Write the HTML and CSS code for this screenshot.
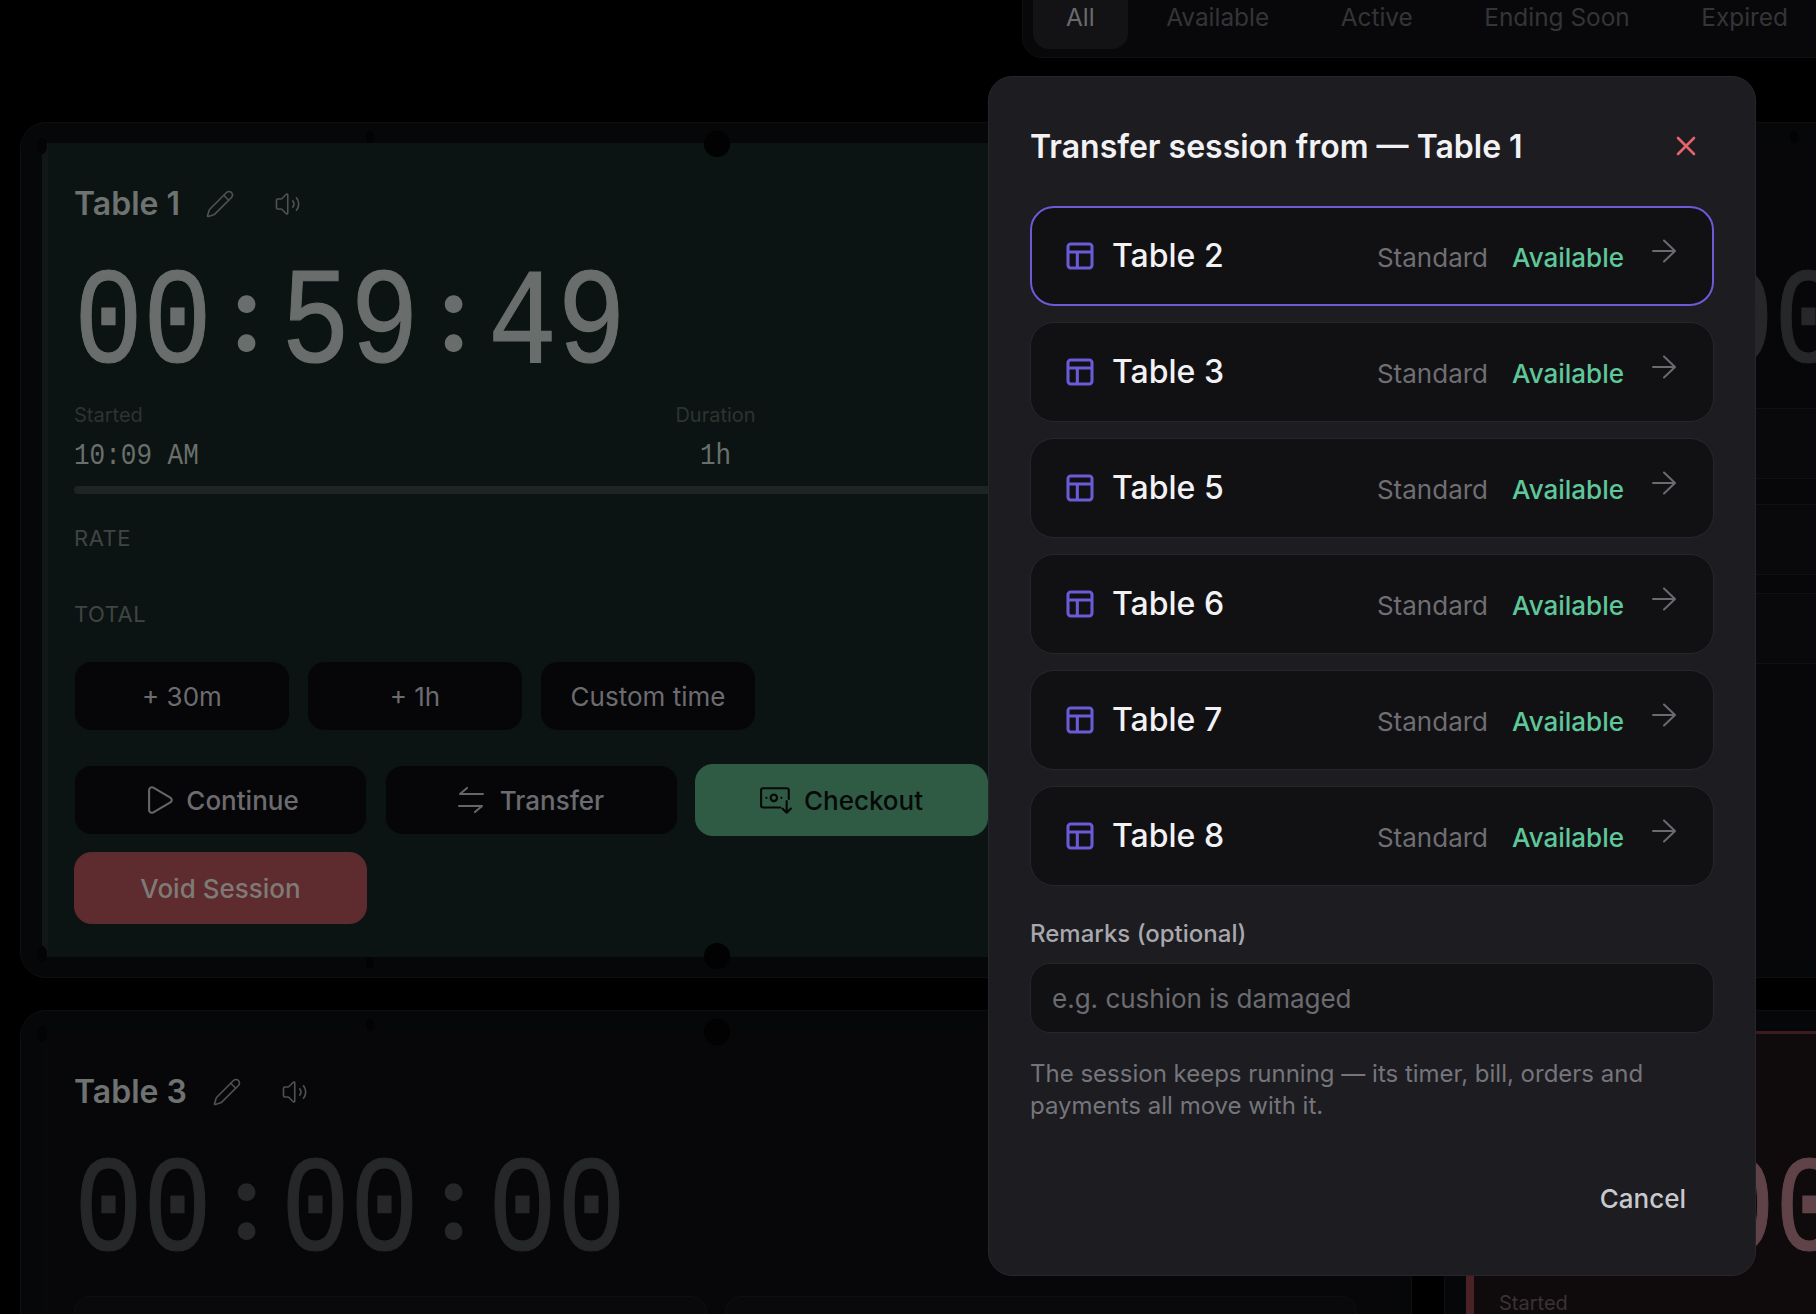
FILE: index.html
```html
<!DOCTYPE html>
<html lang="en">
<head>
    <meta charset="UTF-8">
    <title>Tables - Transfer session</title>
    <link rel="stylesheet" href="styles.css">
</head>
<body>
    <div class="page">
        <div class="filter-bar">
            <span class="filter-tab active">All</span>
            <span class="filter-tab">Available</span>
            <span class="filter-tab">Active</span>
            <span class="filter-tab">Ending Soon</span>
            <span class="filter-tab">Expired</span>
        </div>

        <div class="table-grid">
            <!-- running session -->
            <section class="table-card">
                <span class="pocket pocket-lg pocket-top"></span>
                <span class="pocket pocket-lg pocket-bottom"></span>
                <span class="pocket pocket-sm pocket-top-l"></span>
                <span class="pocket pocket-sm pocket-bottom-l"></span>
                <span class="pocket pocket-corner pocket-tl"></span>
                <span class="pocket pocket-corner pocket-bl"></span>
                <div class="felt felt-green">
                    <div class="card-head">
                        <h2>Table 1</h2>
                        <svg class="head-icon pencil" viewBox="0 0 24 24"><path d="M21.17 6.81a2.8 2.8 0 0 0-3.98-3.99L3.84 16.17a2 2 0 0 0-.5.83L2.02 21.35a.5.5 0 0 0 .62.62l4.35-1.32a2 2 0 0 0 .83-.5z"/><path d="M15 5l4 4"/></svg>
                        <svg class="head-icon speaker" viewBox="0 0 24 24"><path d="M11 4.7a.7.7 0 0 0-1.2-.5L6.4 7.6A1.4 1.4 0 0 1 5.4 8H3a1 1 0 0 0-1 1v6a1 1 0 0 0 1 1h2.400a1.400 1.400 0 0 1 1 .4l3.400 3.400a.7.7 0 0 0 1.200-.5z"/><path d="M15 9.500a4 4 0 0 1 0 5"/><path d="M18 7a8 8 0 0 1 0 10"/></svg>
                    </div>
                    <div class="timer-wrap"><span class="timer">00<span class="colon">:</span>59<span class="colon">:</span>49</span></div>
                    <div class="info-row">
                        <div><div class="info-label">Started</div><div class="info-value"><span>10:09 AM</span></div></div>
                        <div class="center"><div class="info-label">Duration</div><div class="info-value"><span>1h</span></div></div>
                        <div class="right"><div class="info-label">Ends</div><div class="info-value"><span>11:09 AM</span></div></div>
                    </div>
                    <div class="progress"></div>
                    <div class="caps rate">RATE</div>
                    <div class="caps total">TOTAL</div>
                    <div class="add-time">
                        <button class="btn">+ 30m</button>
                        <button class="btn">+ 1h</button>
                        <button class="btn">Custom time</button>
                    </div>
                    <div class="actions">
                        <button class="btn">
                            <svg class="btn-icon play" viewBox="0 0 24 24"><path d="M5 5a2 2 0 0 1 3.008-1.728l11.997 6.998a2 2 0 0 1 .003 3.458l-12 7A2 2 0 0 1 5 19z"/></svg>
                            Continue
                        </button>
                        <button class="btn">
                            <svg class="btn-icon swap" viewBox="0 0 26 26"><path d="M25 7H2L9 1"/><path d="M1 19H24L17 25"/></svg>
                            Transfer
                        </button>
                        <button class="btn btn-green">
                            <svg class="btn-icon cash" viewBox="0 0 30 26"><path d="M27 12V4a2 2 0 0 0-2-2H3a2 2 0 0 0-2 2v14a2 2 0 0 0 2 2h16"/><circle cx="13" cy="11" r="3"/><path d="M6 11h.1M20 11h.1"/><path d="M25 14v11M21 21l4 4 4-4"/></svg>
                            Checkout
                        </button>
                        <button class="btn btn-red">Void Session</button>
                    </div>
                </div>
            </section>

            <section class="table-card">
                <span class="pocket pocket-sm pocket-top-r"></span>
                <div class="felt felt-idle">
                    <div class="card-head"><h2>Table 2</h2></div>
                    <div class="timer-wrap"><span class="timer dim">00<span class="colon">:</span>00<span class="colon">:</span>00</span></div>
                    <div class="sub-box first"></div>
                    <div class="sub-box"></div>
                    <div class="sub-box tight"></div>
                </div>
            </section>

            <section class="table-card">
                <span class="pocket pocket-lg pocket-top"></span>
                <span class="pocket pocket-sm pocket-top-l"></span>
                <span class="pocket pocket-corner pocket-tl"></span>
                <div class="felt felt-idle">
                    <div class="card-head">
                        <h2>Table 3</h2>
                        <svg class="head-icon pencil" viewBox="0 0 24 24"><path d="M21.17 6.81a2.8 2.8 0 0 0-3.98-3.99L3.84 16.17a2 2 0 0 0-.5.83L2.02 21.35a.5.5 0 0 0 .62.62l4.35-1.32a2 2 0 0 0 .83-.5z"/><path d="M15 5l4 4"/></svg>
                        <svg class="head-icon speaker" viewBox="0 0 24 24"><path d="M11 4.7a.7.7 0 0 0-1.2-.5L6.4 7.6A1.4 1.4 0 0 1 5.4 8H3a1 1 0 0 0-1 1v6a1 1 0 0 0 1 1h2.400a1.400 1.400 0 0 1 1 .4l3.400 3.400a.7.7 0 0 0 1.200-.5z"/><path d="M15 9.500a4 4 0 0 1 0 5"/><path d="M18 7a8 8 0 0 1 0 10"/></svg>
                    </div>
                    <div class="timer-wrap"><span class="timer dim">00<span class="colon">:</span>00<span class="colon">:</span>00</span></div>
                    <div class="stat-boxes"><div></div><div></div></div>
                </div>
            </section>

            <section class="table-card">
                <div class="felt felt-red">
                    <div class="card-head"><h2>Table 4</h2></div>
                    <div class="timer-wrap"><span class="timer red">00<span class="colon">:</span>00<span class="colon">:</span>00</span></div>
                    <div class="info-row red-row">
                        <div><div class="info-label">Started</div></div>
                    </div>
                </div>
            </section>
        </div>
    </div>

    <!-- transfer dialog -->
    <div class="modal">
        <div class="modal-head">
            <h1>Transfer session from — Table 1</h1>
            <svg class="close" viewBox="0 0 20 20"><path d="M2 2l16 16M18 2L2 18"/></svg>
        </div>
        <div class="target-list">
            <div class="target selected">
                <svg class="table-icon" viewBox="0 0 24 24"><rect x="3" y="3" width="18" height="18" rx="2"/><path d="M3 9h18M10 9v12"/></svg>
                <span class="target-name">Table 2</span>
                <span class="target-type">Standard</span>
                <span class="target-status">Available</span>
                <svg class="arrow" viewBox="0 0 24 24"><path d="M1 12H23M12 1.500L23 12L12 22.500"/></svg>
            </div>
            <div class="target">
                <svg class="table-icon" viewBox="0 0 24 24"><rect x="3" y="3" width="18" height="18" rx="2"/><path d="M3 9h18M10 9v12"/></svg>
                <span class="target-name">Table 3</span>
                <span class="target-type">Standard</span>
                <span class="target-status">Available</span>
                <svg class="arrow" viewBox="0 0 24 24"><path d="M1 12H23M12 1.500L23 12L12 22.500"/></svg>
            </div>
            <div class="target">
                <svg class="table-icon" viewBox="0 0 24 24"><rect x="3" y="3" width="18" height="18" rx="2"/><path d="M3 9h18M10 9v12"/></svg>
                <span class="target-name">Table 5</span>
                <span class="target-type">Standard</span>
                <span class="target-status">Available</span>
                <svg class="arrow" viewBox="0 0 24 24"><path d="M1 12H23M12 1.500L23 12L12 22.500"/></svg>
            </div>
            <div class="target">
                <svg class="table-icon" viewBox="0 0 24 24"><rect x="3" y="3" width="18" height="18" rx="2"/><path d="M3 9h18M10 9v12"/></svg>
                <span class="target-name">Table 6</span>
                <span class="target-type">Standard</span>
                <span class="target-status">Available</span>
                <svg class="arrow" viewBox="0 0 24 24"><path d="M1 12H23M12 1.500L23 12L12 22.500"/></svg>
            </div>
            <div class="target">
                <svg class="table-icon" viewBox="0 0 24 24"><rect x="3" y="3" width="18" height="18" rx="2"/><path d="M3 9h18M10 9v12"/></svg>
                <span class="target-name">Table 7</span>
                <span class="target-type">Standard</span>
                <span class="target-status">Available</span>
                <svg class="arrow" viewBox="0 0 24 24"><path d="M1 12H23M12 1.500L23 12L12 22.500"/></svg>
            </div>
            <div class="target">
                <svg class="table-icon" viewBox="0 0 24 24"><rect x="3" y="3" width="18" height="18" rx="2"/><path d="M3 9h18M10 9v12"/></svg>
                <span class="target-name">Table 8</span>
                <span class="target-type">Standard</span>
                <span class="target-status">Available</span>
                <svg class="arrow" viewBox="0 0 24 24"><path d="M1 12H23M12 1.500L23 12L12 22.500"/></svg>
            </div>
        </div>
        <label class="remarks-label" for="remarks">Remarks (optional)</label>
        <input class="remarks" id="remarks" type="text" placeholder="e.g. cushion is damaged">
        <p class="help">The session keeps running — its timer, bill, orders and payments all move with it.</p>
        <div class="modal-foot">
            <button class="cancel">Cancel</button>
        </div>
    </div>
</body>
</html>
```

FILE: styles.css
```css
* { box-sizing: border-box; }
html, body { height: 100%; }
body {
    margin: 0; background: #000; overflow: hidden;
    font-family: Inter, "Noto Sans", sans-serif; color: #6e7371;
}
.page { margin-top: -10px; padding-left: 20px; width: 3000px; height: 1400px; overflow: hidden; }

/* filter tabs */
.filter-bar {
    display: flex; gap: 5.5px; height: 68px; margin-left: 1002px; width: 1000px;
    padding: 0 10px 8px; background: #08080a;
    border: 1px solid #101013; border-radius: 0 0 20px 20px;
}
.filter-tab {
    display: flex; align-items: center; padding: 0 33px 6px;
    font-size: 24.4px; color: #343437; border-radius: 0 0 16px 16px;
}
.filter-tab.active { background: #131316; color: #6a6a6e; }

.table-grid { display: grid; grid-template-columns: 1392px 1392px; gap: 32px; margin-top: 64px; }

/* table card: rail + felt */
.table-card {
    position: relative; height: 856px; padding: 20px 21px;
    background: #060709; border: 1px solid #0e0f11; border-radius: 26px;
}
.felt { height: 100%; padding: 41px 33px 32px 26px; border-left: 6px solid #101716; border-radius: 6px; }
.felt-green { background: #0b1412; }
.felt-idle { background: #070709; border-left-color: #08080a; }
.felt-red { background: #0f0b0c; border-left: 8px solid #4a2226; border-top: 3px solid #3a1c20; padding-left: 25px; padding-top: 38px; }

.pocket { position: absolute; background: #020203; border-radius: 50%; }
.pocket-lg { width: 26px; height: 26px; left: 683px; }
.pocket-top { top: 8px; }
.pocket-bottom { bottom: 8px; }
.pocket-sm { width: 8px; height: 12px; background: #030304; }
.pocket-top-l { top: 8px; left: 345px; }
.pocket-bottom-l { bottom: 8px; left: 345px; }
.pocket-top-r { top: 8px; left: 345px; }
.pocket-corner { width: 10px; height: 16px; left: 16px; background: #040405; }
.pocket-tl { top: 15px; }
.pocket-bl { bottom: 15px; }

.card-head { display: flex; align-items: center; height: 40px; }
.card-head h2 { margin: 0; font-size: 32px; line-height: 40px; font-weight: 600; color: #6e7371; }
.head-icon { width: 30px; height: 30px; fill: none; stroke: #4e5251; stroke-width: 1.3; stroke-linecap: round; stroke-linejoin: round; }
.head-icon.pencil { margin-left: 25px; }
.head-icon.speaker { margin-left: 39px; }

/* timer digits */
.timer-wrap { height: 147px; padding-top: 39px; }
.timer {
    display: inline-block; font-family: "Liberation Mono", monospace; font-size: 115px; line-height: 100px;
    color: #696e6c; -webkit-text-stroke: 1px currentColor; white-space: nowrap;
    transform: scaleY(1.2); transform-origin: 0 50%;
}
.colon {
    display: inline-block; width: 69px; text-align: center;
    font-family: Lato, sans-serif; font-weight: 900; font-size: 108px; -webkit-text-stroke: 0;
    transform: scaleY(.85) translateY(-4px);
}
.timer.dim { color: #262729; }
.timer.red { color: #5f4348; }

.info-row { display: grid; grid-template-columns: 1fr 1fr 1fr; margin-top: 32px; }
.info-row .center { text-align: center; }
.info-row .right { text-align: right; }
.info-label { font-size: 20px; line-height: 24px; color: #2e3331; }
.info-value { margin-top: 14px; font-family: "Liberation Mono", monospace; font-size: 26px; line-height: 30px; color: #6a6f6d; }
.info-value span { display: inline-block; transform: scaleY(1.15); }
.red-row .info-label { color: #3a3234; }

.progress { height: 8px; margin-top: 15px; background: #1e2423; border-radius: 4px; }
.caps { font-size: 22px; line-height: 28px; color: #3f4543; letter-spacing: 0.5px; }
.rate { margin-top: 30px; }
.total { margin-top: 48px; }

.btn {
    display: flex; align-items: center; justify-content: center; gap: 10px;
    height: 72px; background: #060608; border: solid #0b1412; border-width: 2px 1px; border-radius: 18px;
    font: 500 26px Inter, sans-serif; color: #6c6c70;
}
.add-time { display: grid; grid-template-columns: repeat(3, 216px); gap: 17px; margin-top: 32px; }
.add-time .btn { font-weight: 400; }
.actions { display: grid; grid-template-columns: repeat(3, 293px); gap: 16px 17.5px; margin-top: 32px; }
.btn-green { background: #2f5b45; border-color: #2f5b45; color: #060908; }
.btn-red { background: #5e2c2e; border-color: #5e2c2e; color: #7e7a78; }
.btn-icon { fill: none; stroke: #66666a; stroke-width: 2; stroke-linecap: round; stroke-linejoin: round; }
.play { width: 34px; height: 34px; stroke-width: 1.5; }
.swap { width: 26px; height: 26px; margin-right: 6px; }
.cash { width: 32px; height: 28px; margin-right: 2px; stroke: #060908; }
.stat-boxes { display: grid; grid-template-columns: 1fr 1fr; gap: 18px; margin-top: 37px; }
.stat-boxes div { height: 120px; background: #09090b; border: 1px solid #0f0f12; border-radius: 16px; }

.sub-box { height: 71px; background: #09090b; border-top: 1px solid #101012; border-bottom: 1px solid #101012; }
.sub-box.first { margin-top: 37px; }
.sub-box:not(.first) { margin-top: 25px; }
.sub-box.tight { margin-top: 18px; }

/* modal */
.modal {
    position: absolute; left: 988px; top: 76px; width: 768px; height: 1200px;
    padding: 47px 41px 0; background: #1c1c21; border: 1px solid #26262b; border-radius: 24px;
}
.modal-head { display: flex; align-items: center; justify-content: space-between; height: 44px; }
.modal-head h1 { margin: 0; font-size: 32px; font-weight: 600; color: #f2f2f4; }
.close { width: 20px; height: 20px; margin-right: 18px; fill: none; stroke: #e5646b; stroke-width: 2.6; stroke-linecap: round; }

.target-list { display: flex; flex-direction: column; gap: 16px; margin-top: 38px; }
.target {
    display: flex; align-items: center; height: 100px; padding: 0 37px 0 33px;
    background: #111114; border: 1px solid #26262b; border-radius: 24px;
}
.target.selected { border: 2px solid #6b5bd6; padding: 0 36px 0 32px; }
.table-icon { width: 32px; height: 32px; fill: none; stroke: #6b5bd6; stroke-width: 2.3; }
.target-name { flex: 1; margin-left: 16px; padding-bottom: 2px; font-size: 32px; font-weight: 500; color: #f2f2f4; }
.target-type { font-size: 26px; color: #6e6e73; margin-top: 2px; }
.target-status { margin: 2px 28px 0 24px; font-size: 26px; font-weight: 500; color: #5fc79a; }
.arrow { width: 24px; height: 24px; margin-bottom: 11px; fill: none; stroke: #6a6a70; stroke-width: 2; stroke-linecap: round; stroke-linejoin: round; }

.remarks-label { display: block; margin-top: 32px; font-size: 24px; line-height: 32px; font-weight: 500; color: #a8a8ad; }
.remarks {
    display: block; width: 100%; height: 70px; margin-top: 13px; padding: 0 21px;
    background: #111114; border: 1px solid #26262b; border-radius: 20px;
    font: 26px Inter, sans-serif; color: #f2f2f4; outline: none;
}
.remarks::placeholder { color: #6b6b70; opacity: 1; }
.help { margin: 25px 0 0; font-size: 24px; line-height: 32px; color: #75757b; }
.modal-foot { display: flex; justify-content: flex-end; margin-top: 40px; }
.cancel { height: 72px; padding: 0 28px; background: none; border: none; font: 500 26px Inter, sans-serif; color: #c9c9cd; }
```
